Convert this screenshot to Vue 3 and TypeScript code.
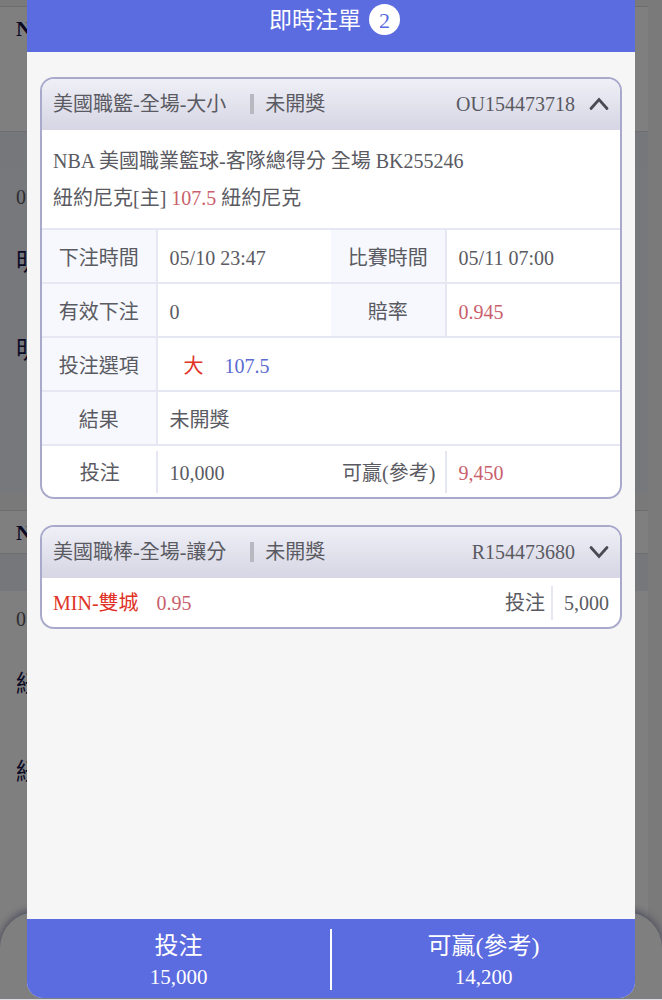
<script setup lang="ts">
import { reactive } from 'vue'

interface Cell {
  label: string
  value: string
  accent?: boolean
  pick?: string
}

interface Bet {
  id: string
  title: string
  status: string
  open: boolean
  league?: string
  match?: { before: string; line: string; after: string }
  rows?: Cell[][]
  pick: string
  odds: string
  stake: string
}

const bets = reactive<Bet[]>([
  {
    id: 'OU154473718',
    title: '美國職籃-全場-大小',
    status: '未開獎',
    open: true,
    league: 'NBA 美國職業籃球-客隊總得分 全場 BK255246',
    match: { before: '紐約尼克[主]', line: '107.5', after: '紐約尼克' },
    rows: [
      [
        { label: '下注時間', value: '05/10 23:47' },
        { label: '比賽時間', value: '05/11 07:00' },
      ],
      [
        { label: '有效下注', value: '0' },
        { label: '賠率', value: '0.945', accent: true },
      ],
      [{ label: '投注選項', value: '107.5', pick: '大' }],
      [{ label: '結果', value: '未開獎' }],
      [
        { label: '投注', value: '10,000' },
        { label: '可贏(參考)', value: '9,450', accent: true },
      ],
    ],
    pick: '大 107.5',
    odds: '0.945',
    stake: '10,000',
  },
  {
    id: 'R154473680',
    title: '美國職棒-全場-讓分',
    status: '未開獎',
    open: false,
    pick: 'MIN-雙城',
    odds: '0.95',
    stake: '5,000',
  },
])

const totals = [
  { label: '投注', value: '15,000' },
  { label: '可贏(參考)', value: '14,200' },
]
</script>

<template>
  <div class="screen">
    <div class="page" aria-hidden="true">
      <div class="list">
        <div class="league tall">N</div>
        <div class="strip"></div>
        <div class="game tinted">
          <span class="time">0</span>
          <span class="team">明</span>
          <span class="team">明</span>
        </div>
        <div class="league">N</div>
        <div class="strip"></div>
        <div class="game">
          <span class="time">0</span>
          <span class="team">紐</span>
          <span class="team">紐</span>
        </div>
      </div>
      <div class="dock"></div>
    </div>

    <div class="overlay">
      <section class="dialog" role="dialog" aria-labelledby="dialog-title">
        <header class="bar">
          <h1 id="dialog-title">即時注單</h1>
          <span class="badge">{{ bets.length }}</span>
        </header>

        <main class="content">
          <article v-for="bet in bets" :key="bet.id" class="card">
            <button class="head" type="button" :aria-expanded="bet.open" @click="bet.open = !bet.open">
              <span class="title">{{ bet.title }}</span>
              <span class="status">{{ bet.status }}</span>
              <span class="number">{{ bet.id }}</span>
              <svg class="chevron" :class="{ up: bet.open }" viewBox="0 0 20 14" width="20" height="14">
                <path
                  d="M2 2.5 L10 11.5 L18 2.5"
                  fill="none"
                  stroke="currentColor"
                  stroke-width="2.8"
                  stroke-linecap="round"
                />
              </svg>
            </button>

            <template v-if="bet.open && bet.rows && bet.match">
              <div class="summary">
                <p>{{ bet.league }}</p>
                <p>
                  {{ bet.match.before }} <span class="rose">{{ bet.match.line }}</span> {{ bet.match.after }}
                </p>
              </div>
              <table class="details">
                <colgroup>
                  <col class="narrow" />
                  <col class="wide" />
                  <col class="narrow" />
                  <col class="wide" />
                </colgroup>
                <tbody>
                  <tr v-for="(row, i) in bet.rows" :key="i">
                    <template v-for="cell in row" :key="cell.label">
                      <th scope="row">{{ cell.label }}</th>
                      <td :colspan="row.length === 1 ? 3 : 1">
                        <div class="value" :class="{ rose: cell.accent, chosen: cell.pick }">
                          <span v-if="cell.pick" class="red">{{ cell.pick }}</span>
                          <span>{{ cell.value }}</span>
                        </div>
                      </td>
                    </template>
                  </tr>
                </tbody>
              </table>
            </template>

            <div v-else class="compact">
              <span class="red">{{ bet.pick }}</span>
              <span class="rose odds">{{ bet.odds }}</span>
              <span class="stake-label">投注</span>
              <span class="stake">{{ bet.stake }}</span>
            </div>
          </article>
        </main>

        <footer class="totals">
          <div v-for="total in totals" :key="total.label" class="total">
            <span class="total-label">{{ total.label }}</span>
            <span class="total-value">{{ total.value }}</span>
          </div>
        </footer>
      </section>
    </div>
  </div>
</template>

<style>
body {
  margin: 0;
}
</style>

<style scoped>
* {
  box-sizing: border-box;
}

.screen {
  position: relative;
  height: 100vh;
  overflow: hidden;
  border-bottom: 1px solid #dcdce2;
  font-family: "Liberation Serif", "Noto Sans CJK TC", serif;
  font-size: 20px;
  line-height: 28px;
  color: #5a5a62;
}

.page {
  position: relative;
  height: 100%;
  background: #f4f4f5;
}

.list {
  margin-right: 14px;
  height: 100%;
  padding-top: 6px;
}

.league {
  height: 44px;
  padding: 8px 16px;
  background: #fff;
  border-top: 1px solid #dcdce2;
  border-bottom: 1px solid #dcdce2;
  color: #14144a;
  font-size: 22px;
  font-weight: bold;
}

.league.tall {
  height: 126px;
}

.strip {
  height: 37px;
  background: #eceef4;
}

.game {
  display: flex;
  flex-direction: column;
  height: 341px;
  padding: 14px 16px;
  background: #fff;
}

.game.tinted {
  background: #eef0f8;
  border-bottom: 17px solid #f2f2f4;
}

.team {
  margin-top: 32px;
  line-height: 56px;
  color: #14144a;
  font-size: 24px;
}

.time + .team {
  margin-top: 23px;
}

.time {
  line-height: 28px;
}

.dock {
  position: absolute;
  inset: auto 0 0;
  height: 87px;
  background: #fff;
  border-radius: 36px 36px 0 0;
  box-shadow: 0 -2px 8px #9090b4;
}

.overlay {
  position: absolute;
  inset: 0;
  display: flex;
  padding: 0 27px 1px;
  background: rgba(0, 0, 0, 0.5);
}

.dialog {
  flex: 1;
  display: flex;
  flex-direction: column;
  overflow: hidden;
  border-radius: 0 0 16px 16px;
  background: #f6f6f7;
}

.bar {
  display: flex;
  justify-content: center;
  gap: 8px;
  height: 52px;
  padding: 4px 0 0 7px;
  background: #5b6be0;
  color: #fff;
}

.bar h1 {
  margin: 0;
  font-size: 23px;
  font-weight: normal;
  line-height: 34px;
}

.badge {
  width: 31px;
  height: 31px;
  border-radius: 50%;
  background: #fff;
  color: #5b6be0;
  font-size: 22px;
  line-height: 34px;
  text-align: center;
}

.content {
  flex: 1;
  display: flex;
  flex-direction: column;
  gap: 26px;
  padding: 25px 13px;
}

.card {
  overflow: hidden;
  border: 2px solid #a9aacb;
  border-radius: 14px;
  background: #fff;
}

.head {
  display: flex;
  align-items: center;
  width: 100%;
  height: 51px;
  padding: 0 11px 2px;
  border: 0;
  background: linear-gradient(#efeff7, #d6d6e4);
  color: inherit;
  font: inherit;
}

.status {
  display: flex;
  align-items: center;
  margin-left: 24px;
}

.status::before {
  content: "";
  width: 4px;
  height: 20px;
  margin-right: 11px;
  background: #b8b8c0;
}

.number {
  margin-left: auto;
}

.chevron {
  margin-left: 14px;
  color: #4a4a52;
}

.chevron.up {
  transform: rotate(180deg);
}

.summary {
  padding: 13px 11px 11px;
  line-height: 37px;
}

.summary p {
  margin: 0;
}

.details {
  width: 100%;
  table-layout: fixed;
  border-collapse: separate;
  border-spacing: 0;
}

.narrow {
  width: 20%;
}

.wide {
  width: 30%;
}

.details th,
.details td {
  height: 54px;
  padding: 3px 0 0;
  border-top: 2px solid #e5e7f3;
}

.details tr:last-child > * {
  height: 53px;
}

.details th {
  background: #f6f8fd;
  border-right: 2px solid #e5e7f3;
  font-weight: normal;
}

.value {
  display: flex;
  align-items: center;
  height: 42px;
  padding-left: 12px;
}

.value.chosen {
  gap: 21px;
  padding-left: 26px;
  color: #5b6bd0;
}

.details tr:last-child th {
  background: linear-gradient(#e5e7f3, #e5e7f3) right center / 2px 42px no-repeat;
  border-right: 0;
}

.rose {
  color: #c9606c;
}

.red {
  color: #e03226;
}

.compact {
  display: flex;
  align-items: center;
  height: 49px;
  padding: 0 11px;
}

.odds {
  margin-left: 18px;
}

.stake-label {
  margin-left: auto;
}

.stake {
  margin-left: 6px;
  padding-left: 11px;
  border-left: 2px solid #e5e7f3;
  line-height: 34px;
}

.totals {
  display: flex;
  height: 79px;
  padding: 10px 0 8px;
  background: #5b6be0;
  color: #fff;
}

.total {
  flex: 1;
  display: flex;
  flex-direction: column;
  align-items: center;
}

.total + .total {
  border-left: 2px solid #fff;
}

.total-label {
  font-size: 24px;
  line-height: 34px;
}

.total-value {
  font-size: 21px;
  line-height: 28px;
}
</style>
